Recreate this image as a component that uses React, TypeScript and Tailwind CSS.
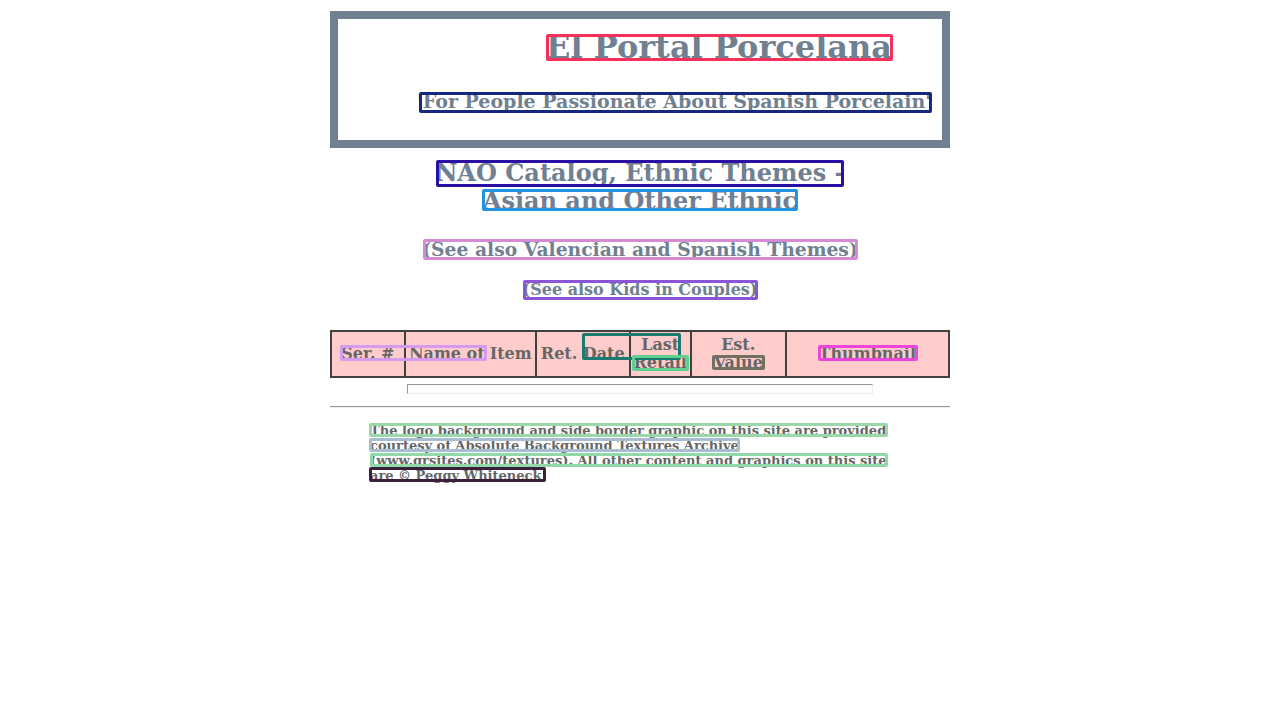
const marks = [
  { l: 546, t: 34, w: 347, h: 27, c: "#f5315b" },
  { l: 419, t: 92, w: 513, h: 21, c: "#15287f" },
  { l: 436, t: 160, w: 408, h: 27, c: "#2b10a6" },
  { l: 482, t: 189, w: 316, h: 22, c: "#2293e0" },
  { l: 423, t: 239, w: 435, h: 21, c: "#d68ad6" },
  { l: 523, t: 280, w: 235, h: 20, c: "#8a55d6" },
  { l: 340, t: 345, w: 147, h: 16, c: "#d49bf0" },
  { l: 582, t: 333, w: 99, h: 27, c: "#1b7a70" },
  { l: 632, t: 355, w: 57, h: 16, c: "#5fcf8f" },
  { l: 712, t: 355, w: 53, h: 15, c: "#6f7060" },
  { l: 818, t: 345, w: 100, h: 16, c: "#ee45dc" },
  { l: 369, t: 423, w: 519, h: 14, c: "#9bd8a9" },
  { l: 369, t: 438, w: 371, h: 14, c: "#a9bdd1" },
  { l: 370, t: 453, w: 518, h: 14, c: "#92d9aa" },
  { l: 369, t: 467, w: 177, h: 15, c: "#3c1f3a" },
];

const heads = [
  { w: "w-[74px]", label: "Ser. #" },
  { w: "w-[132px]", label: "Name of Item" },
  { w: "w-[94px]", label: "Ret. Date" },
  { w: "w-[61px]", label: "Last Retail" },
  { w: "w-[95px]", label: "Est. Value" },
  { w: "w-[164px]", label: "Thumbnail" },
];

export default function App() {
  return (
    <div className="relative min-h-[720px] bg-white font-['DejaVu_Serif',serif] font-bold">
      <div className="w-[620px] mx-auto pt-[11px]">
        {/* banner */}
        <div className="border-8 border-[#708090] h-[137px] text-[#708090]">
          <div className="pl-[208px] pt-[8px] text-[32px] leading-[40px]">El Portal Porcelana</div>
          <div className="pl-[79px] pt-[23px] text-[19px] leading-[22px] whitespace-nowrap">'For People Passionate About Spanish Porcelain'</div>
        </div>

        {/* page title */}
        <div className="text-center text-[#708090] mt-[11px]">
          <div className="text-[24px] leading-[28px] px-[90px]">NAO Catalog, Ethnic Themes - Asian and Other Ethnic</div>
          <div className="text-[18.72px] leading-[22px] mt-[23px]">(See also Valencian and Spanish Themes)</div>
          <div className="text-[16px] leading-[20px] mt-[20px]">(See also Kids in Couples)</div>
        </div>

        {/* catalog table */}
        <table className="mt-[30px] w-[620px] h-[48px] border border-[#404040] bg-[#ffcccc] text-[#666666] text-[16px] leading-[18px] border-separate border-spacing-0">
          <tbody>
            <tr>
              {heads.map((h) => (
                <td key={h.label} className={`${h.w} border border-[#404040] text-center px-[3px]`}>
                  {h.label}
                </td>
              ))}
            </tr>
          </tbody>
        </table>
        <div className="mx-auto mt-[6px] w-[466px] h-[10px] border border-t-[#999999] border-l-[#999999] border-b-[#eeeeee] border-r-[#eeeeee]" />

        <hr className="mt-[12px] border-0 border-t border-t-[#999999] border-b border-b-[#eeeeee]" />

        {/* credits */}
        <div className="mx-[40px] mt-[15px] text-[13px] leading-[15px] text-[#666666]">
          The logo background and side border graphic on this site are provided courtesy of Absolute Background Textures Archive (www.grsites.com/textures). All other content and graphics on this site are © Peggy Whiteneck
        </div>
      </div>

      {/* outlined text regions */}
      {marks.map((m, i) => (
        <div
          key={i}
          className="absolute border-[3px] rounded-[2px] pointer-events-none"
          style={{ left: m.l, top: m.t, width: m.w, height: m.h, borderColor: m.c }}
        />
      ))}
    </div>
  );
}
